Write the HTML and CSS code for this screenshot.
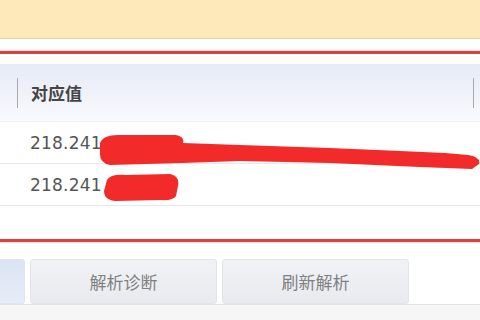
FILE: index.html
```html
<!DOCTYPE html>
<html lang="zh-CN">
<head>
<meta charset="utf-8">
<link rel="stylesheet" href="styles.css">
</head>
<body>
<div class="page">
  <div class="notice"></div>
  <div class="gap"></div>
  <div class="panel">
    <div class="thead">
      <div class="th th-first"></div>
      <div class="th th-main">对应值</div>
    </div>
    <div class="row"><span class="val">218.241</span></div>
    <div class="row"><span class="val">218.241</span></div>
    <div class="row row-empty"></div>
  </div>
  <div class="actions">
    <div class="btn btn-active"></div>
    <div class="btn">解析诊断</div>
    <div class="btn">刷新解析</div>
  </div>
  <div class="footer"></div>
  <svg class="scribble" width="480" height="320" viewBox="0 0 480 320">
    <path d="M100,143 Q103,135 118,135 L176,135 Q185,137 183,143 L240,145 L330,148 L400,151 L445,153 L468,155 Q481,157 479,164 L472,169 L420,167 L330,163 L240,161 L182,163 L110,165 Q99,163 100,152 Z" fill="#f22a2a"/>
    <path d="M107,180 Q110,174 126,175 L170,174 Q180,176 178,186 L176,196 Q173,201 160,200 L116,201 Q104,200 104,191 Z" fill="#f22a2a"/>
  </svg>
</div>
</body>
</html>
```
FILE: styles.css
```css
html, body {
  margin: 0;
  padding: 0;
  background: #ffffff;
}
.page {
  position: relative;
  width: 480px;
  height: 320px;
  overflow: hidden;
  font-family: "DejaVu Sans", "Noto Sans CJK SC", sans-serif;
  display: flex;
  flex-direction: column;
}
.notice {
  height: 38px;
  flex: none;
  background: #fde9b9;
  border-bottom: 1px solid #ead09a;
}
.gap {
  height: 12px;
  flex: none;
}
.panel {
  flex: none;
  height: 175px;
  border-top: 3px solid #d9423f;
  border-bottom: 3px solid #d9423f;
  box-shadow: 0 0 2px rgba(235, 90, 90, 0.6);
  padding-top: 10px;
  box-sizing: content-box;
  display: flex;
  flex-direction: column;
}
.thead {
  height: 57px;
  flex: none;
  display: flex;
  align-items: center;
  background: linear-gradient(#e6eaf5, #f8fafd);
  border-bottom: 1px solid #eceef2;
}
.th {
  height: 30px;
  display: flex;
  align-items: center;
}
.th-first {
  width: 17px;
}
.th-main {
  flex: 1;
  margin-right: 6px;
  padding-left: 13px;
  border-left: 1px solid #a8aab0;
  border-right: 1px solid #a8aab0;
  font-family: "Noto Sans CJK SC", sans-serif;
  font-weight: bold;
  font-size: 17px;
  color: #454545;
}
.row {
  height: 41px;
  flex: none;
  display: flex;
  align-items: center;
  border-bottom: 1px solid #e8e8ea;
  padding-left: 30px;
}
.row-empty {
  flex: 1;
  border-bottom: none;
}
.val {
  font-size: 17px;
  color: #555555;
  letter-spacing: 0.2px;
}
.actions {
  flex: none;
  display: flex;
  gap: 5px;
  padding-top: 17px;
  height: 45px;
  border-bottom: 1px solid #e4e4e4;
}
.btn {
  width: 187px;
  height: 45px;
  box-sizing: border-box;
  border: 1px solid #e3e5e9;
  border-radius: 3px;
  background: linear-gradient(#f1f2f5, #e8eaef);
  display: flex;
  align-items: center;
  justify-content: center;
  font-family: "Noto Sans CJK SC", sans-serif;
  font-size: 17px;
  color: #808080;
}
.btn-active {
  width: 25px;
  border-left: none;
  border-radius: 0 3px 3px 0;
  background: linear-gradient(#dbe4f2, #e7edf7);
  border-color: #e0e6ef;
}
.footer {
  flex: 1;
  background: #f6f6f6;
}
.scribble {
  position: absolute;
  left: 0;
  top: 0;
  pointer-events: none;
}
```
